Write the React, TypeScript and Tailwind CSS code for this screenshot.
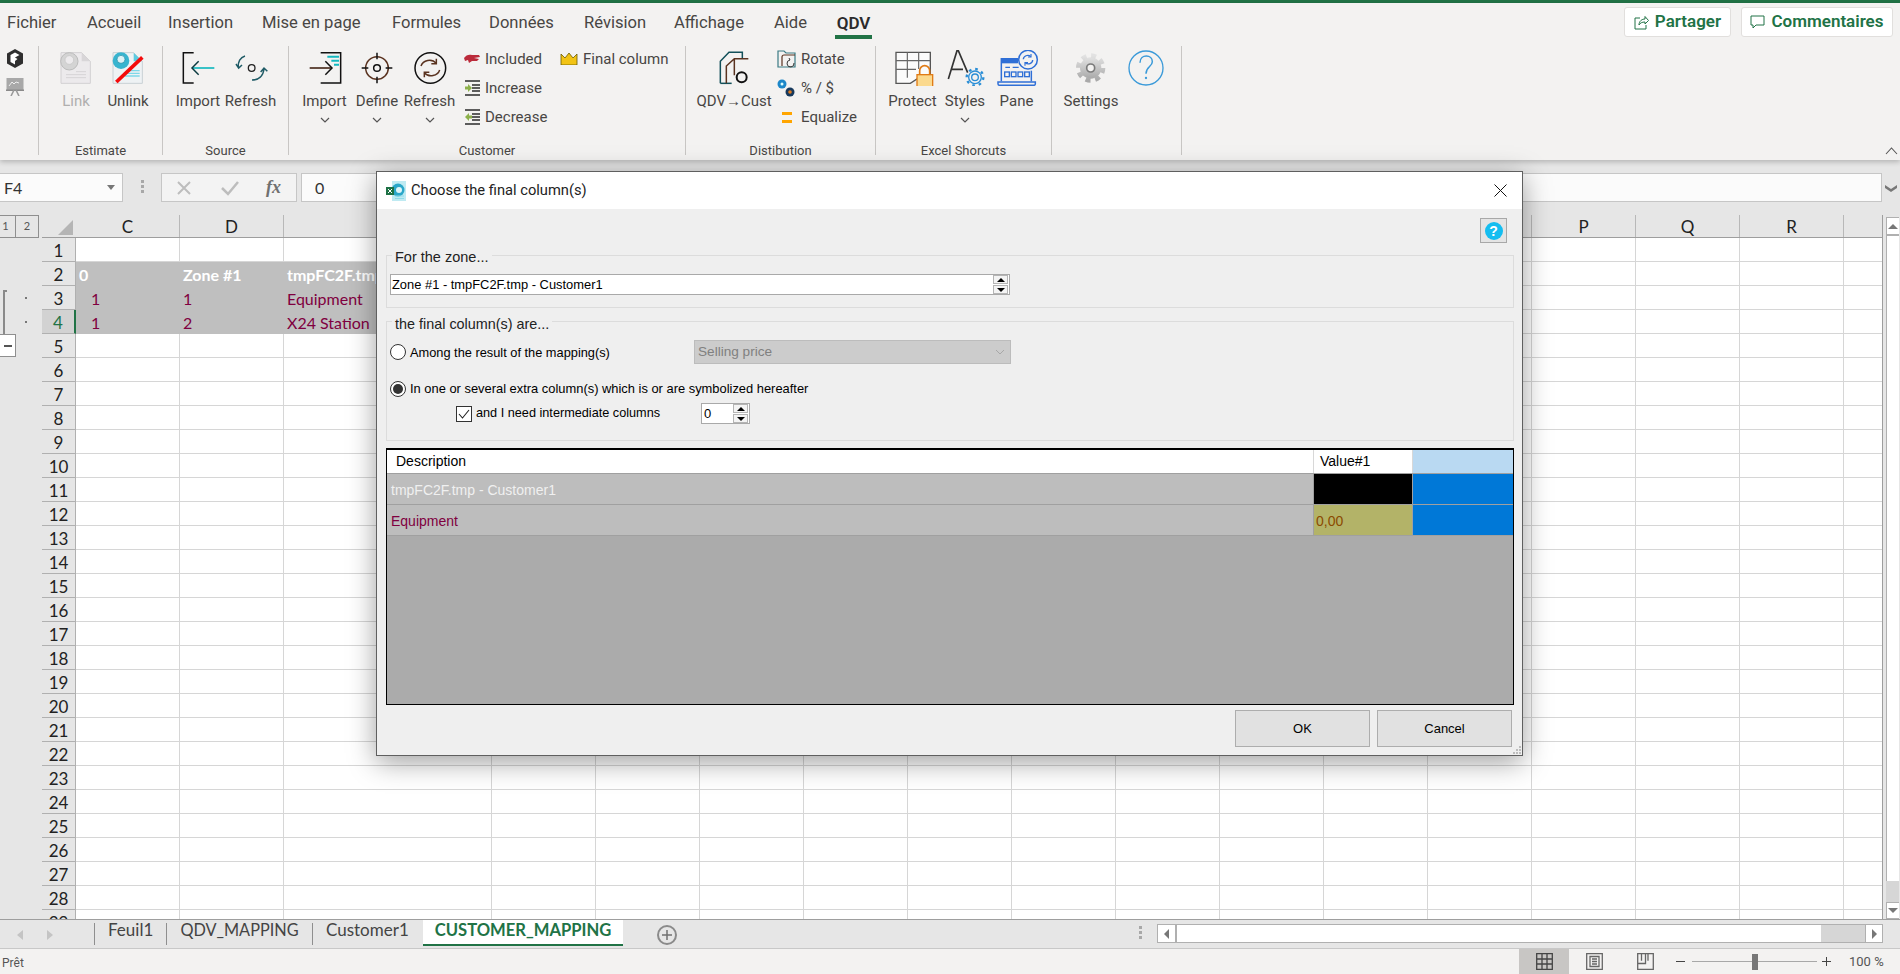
import React from "react";

const Ui = "font-['Roboto',sans-serif]";
const Cal = "font-['Lato',sans-serif]";
const Ms = "font-['Liberation_Sans',Arial,sans-serif]";

function Ico({ cx, children }: { cx: number; children: React.ReactNode }) {
  return (
    <svg width={44} height={36} viewBox={`${cx - 66} 18 132 108`} className="block shrink-0" fill="none">
      {children}
    </svg>
  );
}

function Chev() {
  return (
    <svg width={10} height={6} viewBox="0 0 10 6" className="block" fill="none">
      <path d="M1 1l4 4 4-4" stroke="#555" strokeWidth="1.2" />
    </svg>
  );
}

function Large({
  w,
  label,
  chev,
  dim,
  children,
}: {
  w: string;
  label?: string;
  chev?: boolean;
  dim?: boolean;
  children: React.ReactNode;
}) {
  return (
    <div className={`${w} flex shrink-0 flex-col items-center`}>
      <div className="flex h-[36px] justify-center">{children}</div>
      {label && (
        <div className={`mt-[5px] h-[20px] whitespace-nowrap text-[15px] leading-[20px] ${dim ? "text-[#b0afae]" : "text-[#484644]"}`}>
          {label}
        </div>
      )}
      {chev && (
        <div className="mt-[6px]">
          <Chev />
        </div>
      )}
    </div>
  );
}

function Small({ slot, icon, label }: { slot: string; icon: React.ReactNode; label: string }) {
  return (
    <div className="flex h-[24px] items-center whitespace-nowrap text-[15px] text-[#484644]">
      <div className={`${slot} flex shrink-0 items-center`}>{icon}</div>
      {label}
    </div>
  );
}

function Group({ w, label, children }: { w: string; label?: string; children: React.ReactNode }) {
  return (
    <div className={`${w} flex h-[109px] shrink-0 flex-col border-r border-[#c8c6c4]`}>
      <div className="flex flex-1 items-start pt-[4px]">{children}</div>
      {label && <div className="-mb-[4px] h-[16px] text-center text-[13px] leading-[16px] text-[#484644]">{label}</div>}
    </div>
  );
}

function LinesIcon({ dir }: { dir: "in" | "out" }) {
  return (
    <svg width={17} height={16} viewBox="0 0 17 16" fill="none" className="block">
      <path d="M1 1h15M8 5h8M8 8h8M8 11h8M1 15h15" stroke="#2b2b2b" strokeWidth="1.7" />
      {dir === "in" ? (
        <path d="M1 6.500h3V4l4 4-4 4V9.500H1z" fill="#8cb04a" />
      ) : (
        <path d="M8 6.500H5V4L1 8l4 4V9.500h3z" fill="#8cb04a" />
      )}
    </svg>
  );
}

function Ribbon() {
  const tabs: [string, string][] = [
    ["Fichier", "w-[80px]"],
    ["Accueil", "w-[81px]"],
    ["Insertion", "w-[94px]"],
    ["Mise en page", "w-[130px]"],
    ["Formules", "w-[97px]"],
    ["Données", "w-[95px]"],
    ["Révision", "w-[90px]"],
    ["Affichage", "w-[100px]"],
    ["Aide", "w-[61px]"],
  ];
  return (
    <div className={`${Ui} relative z-10 flex h-[157px] shrink-0 flex-col bg-[#f3f2f1] shadow-[0_2px_5px_rgba(0,0,0,0.22)]`}>
      <div className="flex h-[43px] shrink-0 items-start pl-[7px]">
        {tabs.map(([t, w]) => (
          <div key={t} className={`${w} mt-[8px] h-[24px] text-[16.600px] leading-[24px] text-[#484644]`}>
            {t}
          </div>
        ))}
        <div className="mt-[7px] h-[29px] w-[37px] whitespace-nowrap border-b-4 border-[#217346] pt-[1px] text-center text-[17px] font-semibold leading-[24px] text-[#2b2b2b]">
          QDV
        </div>
        <div className="ml-auto mr-[7px] mt-[4px] flex gap-[10px]">
          <div className="flex h-[30px] w-[107px] items-center justify-center gap-[6px] rounded-[3px] border border-[#e1dfdd] bg-white text-[17px] font-semibold text-[#217346]">
            <svg width={15} height={15} viewBox="0 0 15 15" fill="none" stroke="#217346" strokeWidth="1">
              <path d="M6 3H1v11h11v-4M5 10c0-4 3-6 6-6V1.500l3.500 4L11 9V7C8 7 6 8 5 10z" />
            </svg>
            Partager
          </div>
          <div className="flex h-[30px] w-[152px] items-center justify-center gap-[6px] rounded-[3px] border border-[#e1dfdd] bg-white text-[17px] font-semibold text-[#217346]">
            <svg width={15} height={14} viewBox="0 0 15 14" fill="none" stroke="#217346" strokeWidth="1">
              <path d="M1 1h13v9H6l-3 3v-3H1z" />
            </svg>
            Commentaires
          </div>
        </div>
      </div>

      <div className="flex items-start">
        <div className="flex h-[109px] w-[39px] shrink-0 flex-col items-center border-r border-[#c8c6c4] pr-[8px] pt-[3px]">
          <svg width={18} height={19} viewBox="0 0 18 19">
            <path d="M9 0l8 4.500v10L9 19l-8-4.500v-10z" fill="#2f2f2f" />
            <path d="M4.500 6L9 3.500 13.500 6 9 8.500 9 15.500 4.500 13z" fill="#fff" />
            <path d="M9 8.500l2.500 1.500L9 12z" fill="#fff" />
          </svg>
          <svg width={18} height={19} viewBox="0 0 18 19" className="mt-[9px]">
            <rect x="0.500" y="1" width="17" height="12" fill="#a8a8a8" />
            <path d="M3 9l3-4 2 2 2-2 3 1" stroke="#eee" fill="none" />
            <rect x="0" y="12.500" width="18" height="1.500" fill="#8a8a8a" />
            <path d="M5 19l3-6M13 19l-3-6" stroke="#9a9a9a" strokeWidth="1.600" />
          </svg>
        </div>

        <Group w="w-[124px]" label="Estimate">
          <div className="flex pl-[11px]">
            <Large w="w-[52px]" label="Link" dim>
              <Ico cx={225}>
                <path d="M180 26h62l26 26v66h-88z" fill="#eceaec" stroke="#d2d0d2" strokeWidth="3" />
                <path d="M242 26v26h26z" fill="#d8d6d8" />
                <circle cx="205" cy="52" r="26" fill="#d4d4d4" stroke="#bbb" strokeWidth="3" />
                <circle cx="205" cy="48" r="13" fill="#eceaec" stroke="#c4c4c4" strokeWidth="2" />
                <path d="M195 92h60M195 101h60M225 83h30" stroke="#d6d4d6" strokeWidth="3" />
              </Ico>
            </Large>
            <Large w="w-[52px]" label="Unlink">
              <Ico cx={381}>
                <path d="M336 26h62l26 26v66h-88z" fill="#eef2f4" stroke="#c8d0d4" strokeWidth="3" />
                <path d="M398 26v26h26z" fill="#5ccbe0" />
                <circle cx="360" cy="50" r="25" fill="#37b4cf" />
                <circle cx="360" cy="46" r="12" fill="#dcf2f6" stroke="#1d8ba5" strokeWidth="2" />
                <path d="M372 88h44M372 96h44M382 80h34" stroke="#7fd7e8" strokeWidth="4" />
                <path d="M346 114L424 40" stroke="#f40b0b" strokeWidth="11" />
              </Ico>
            </Large>
          </div>
        </Group>

        <Group w="w-[126px]" label="Source">
          <div className="flex pl-[9px]">
            <Large w="w-[52px]" label="Import">
              <Ico cx={596}>
                <path d="M583 26h-31v91h31" stroke="#111" strokeWidth="4.500" />
                <path d="M645 72h-66" stroke="#14b8bf" strokeWidth="5" />
                <path d="M598 52l-20 20 20 20" stroke="#0c3b40" strokeWidth="4.500" />
              </Ico>
            </Large>
            <Large w="w-[53px]" label="Refresh">
              <Ico cx={753}>
                <circle cx="755" cy="72" r="10" stroke="#222" strokeWidth="4" />
                <path d="M735 36c-14 4-22 18-20 34M708 60l8 12 10-9" stroke="#1f5b66" strokeWidth="4.500" />
                <path d="M756 108c20 0 34-12 36-34M782 84l10-12 10 10" stroke="#1f5b66" strokeWidth="4.500" />
              </Ico>
            </Large>
          </div>
        </Group>

        <Group w="w-[397px]" label="Customer">
          <div className="flex pl-[9px]">
            <Large w="w-[53px]" label="Import" chev>
              <Ico cx={973}>
                <path d="M960 26h60v91h-60" stroke="#111" strokeWidth="4.500" />
                <path d="M980 38h35M992 50h23M1000 62h15" stroke="#14b8bf" strokeWidth="6" />
                <path d="M927 72h66" stroke="#4a2c1d" strokeWidth="5" />
                <path d="M974 52l20 20-20 20" stroke="#111" strokeWidth="4.500" />
              </Ico>
            </Large>
            <Large w="w-[52px]" label="Define" chev>
              <Ico cx={1131}>
                <circle cx="1131" cy="72" r="34" stroke="#5a3320" strokeWidth="4.500" />
                <circle cx="1131" cy="72" r="10" stroke="#111" strokeWidth="4.500" />
                <path d="M1131 26v20M1131 98v20M1085 72h20M1157 72h20" stroke="#111" strokeWidth="4.500" />
              </Ico>
            </Large>
            <Large w="w-[53px]" label="Refresh" chev>
              <Ico cx={1289}>
                <circle cx="1290" cy="72" r="46" stroke="#111" strokeWidth="4.500" />
                <path d="M1262 66c6-18 32-24 46-8M1318 78c-6 18-32 24-46 8" stroke="#5a3320" strokeWidth="4.500" />
                <path d="M1308 44v15h-15M1272 100V85h15" stroke="#5a3320" strokeWidth="4.500" />
              </Ico>
            </Large>
            <div className="-mt-[3px] ml-[8px] flex w-[96px] flex-col gap-[5px]">
              <Small
                slot="w-[21px]"
                label="Included"
                icon={
                  <svg width={16} height={10} viewBox="0 0 16 10">
                    <path d="M0 4c2-3 5-4 8-3h7l1 2-6 1 5 1-2 2H8L5 9 4 6 1 7z" fill="#bb2b3b" />
                  </svg>
                }
              />
              <Small slot="w-[21px]" label="Increase" icon={<LinesIcon dir="in" />} />
              <Small slot="w-[21px]" label="Decrease" icon={<LinesIcon dir="out" />} />
            </div>
            <div className="-mt-[3px]">
              <Small
                slot="w-[23px]"
                label="Final column"
                icon={
                  <svg width={18} height={12} viewBox="0 0 18 12">
                    <path d="M1 1l4 4 4-5 4 5 4-4v11H1z" fill="#f2c314" stroke="#6b5a00" strokeWidth="0.800" />
                  </svg>
                }
              />
            </div>
          </div>
        </Group>

        <Group w="w-[190px]" label="Distibution">
          <div className="flex pl-[5px]">
            <Large w="w-[86px]" label="QDV→Cust">
              <Ico cx={107}>
                <path d="M66 118V52l26-27h40v20" stroke="#12505a" strokeWidth="4.500" />
                <path d="M66 118h34" stroke="#12505a" strokeWidth="4.500" />
                <path d="M84 118V66l24-22h42M108 44v50" stroke="#5a3320" strokeWidth="4.500" />
                <circle cx="130" cy="100" r="15" stroke="#111" strokeWidth="6" />
              </Ico>
            </Large>
            <div className="-mt-[3px] flex flex-col gap-[5px]">
              <Small
                slot="w-[24px]"
                label="Rotate"
                icon={
                  <svg width={20} height={20} viewBox="0 0 20 20" fill="none">
                    <path d="M1 18V2h6l2 2h9v14z" stroke="#3a7a84" strokeWidth="1.200" />
                    <path d="M5 17V8a2 2 0 012-2h11" stroke="#5a3320" strokeWidth="1.200" />
                    <path d="M17 14a3.500 3.500 0 11-4-3l-1-2" stroke="#333" strokeWidth="1" />
                  </svg>
                }
              />
              <Small
                slot="w-[24px]"
                label="% / $"
                icon={
                  <svg width={18} height={18} viewBox="0 0 18 18">
                    <circle cx="5" cy="5" r="4.500" fill="#1c87c9" />
                    <circle cx="5" cy="5" r="1.500" fill="#dff" />
                    <circle cx="13" cy="13" r="4.500" fill="#17395c" />
                    <circle cx="13" cy="13" r="1.800" fill="#e07a1f" />
                  </svg>
                }
              />
              <Small
                slot="w-[24px]"
                label="Equalize"
                icon={
                  <div className="ml-[5px] flex h-[11px] w-[10px] flex-col justify-between">
                    <div className="h-[3px] bg-[#ffa500]" />
                    <div className="h-[3px] bg-[#ffa500]" />
                  </div>
                }
              />
            </div>
          </div>
        </Group>

        <Group w="w-[176px]" label="Excel Shorcuts">
          <div className="flex pl-[10px]">
            <Large w="w-[53px]" label="Protect">
              <Ico cx={636}>
                <path d="M585 25h103v80h-40l-20 13h-43z" fill="#fbfbfb" stroke="#555" strokeWidth="4" />
                <path d="M619 25v76M653 25v50M585 50h103M585 76h60" stroke="#666" strokeWidth="3.500" />
                <rect x="648" y="92" width="47" height="38" fill="#fbd98d" stroke="#e07b16" strokeWidth="4" />
                <path d="M656 92V80a15 15 0 0130 0v12" stroke="#e07b16" strokeWidth="5" />
              </Ico>
            </Large>
            <Large w="w-[52px]" label="Styles" chev>
              <Ico cx={792}>
                <path d="M742 105l26-85h4l28 66M752 76h34" stroke="#333" strokeWidth="5" />
                <circle cx="822" cy="100" r="10" stroke="#2a8ed6" strokeWidth="4" />
                <circle cx="822" cy="100" r="19" fill="#f3f2f1" fillOpacity="0" stroke="#2a8ed6" strokeWidth="4" />
                <circle cx="822" cy="100" r="25" stroke="#2a8ed6" strokeWidth="7" strokeDasharray="8 11.600" />
              </Ico>
            </Large>
            <Large w="w-[51px]" label="Pane">
              <Ico cx={945}>
                <path d="M898 112V44h50" stroke="#2f6fd6" strokeWidth="4.500" />
                <path d="M898 44h50v14h-50z" fill="#2f6fd6" />
                <path d="M888 114h112v5a5 5 0 01-5 5H893a5 5 0 01-5-5z" stroke="#2f6fd6" strokeWidth="4.500" />
                <path d="M988 80v32" stroke="#2f6fd6" strokeWidth="4.500" />
                <path d="M910 70h14M932 70h18" stroke="#2f6fd6" strokeWidth="4" />
                <rect x="908" y="84" width="14" height="14" stroke="#2f6fd6" strokeWidth="4" />
                <rect x="928" y="84" width="14" height="14" stroke="#2f6fd6" strokeWidth="4" />
                <rect x="948" y="84" width="14" height="14" stroke="#2f6fd6" strokeWidth="4" />
                <rect x="968" y="84" width="14" height="14" stroke="#2f6fd6" strokeWidth="4" />
                <circle cx="978" cy="47" r="28" fill="#f3f2f1" stroke="#2f6fd6" strokeWidth="4.500" />
                <path d="M964 46c0-10 14-16 22-8M992 48c0 10-14 16-22 8" stroke="#2f6fd6" strokeWidth="4" />
                <path d="M987 30v9h-9M969 65v-9h9" stroke="#2f6fd6" strokeWidth="3.500" />
              </Ico>
            </Large>
          </div>
        </Group>

        <Group w="w-[130px]">
          <div className="flex pl-[11px]">
            <Large w="w-[56px]" label="Settings">
              <Ico cx={1173}>
                <defs>
                  <linearGradient id="gearFill" x1="0" y1="0" x2="0" y2="1">
                    <stop offset="0" stopColor="#e2e2e2" />
                    <stop offset="1" stopColor="#a9a9a9" />
                  </linearGradient>
                </defs>
                <circle cx="1172" cy="72" r="32" fill="url(#gearFill)" />
                <circle cx="1172" cy="72" r="37" stroke="url(#gearFill)" strokeWidth="14" strokeDasharray="15 14.100" />
                <circle cx="1172" cy="72" r="12" fill="#f3f2f1" stroke="#7a7a7a" strokeWidth="5" />
              </Ico>
            </Large>
            <Large w="w-[53px]">
              <Ico cx={1338}>
                <circle cx="1338" cy="72" r="51" stroke="#3a9ad9" strokeWidth="4" />
                <path d="M1320 56c0-14 10-20 19-20 10 0 18 7 18 17 0 15-19 15-19 36" stroke="#3a9ad9" strokeWidth="4.500" />
                <circle cx="1338" cy="102" r="3.500" fill="#3a9ad9" />
              </Ico>
            </Large>
          </div>
        </Group>
        <div className="ml-auto mr-[2px] mt-[101px]">
          <svg width={13} height={8} viewBox="0 0 13 8" fill="none" className="block">
            <path d="M1 7l5.500-6L12 7" stroke="#555" strokeWidth="1.100" />
          </svg>
        </div>
      </div>
    </div>
  );
}

function FormulaBar() {
  return (
    <div className={`${Cal} flex h-[55px] shrink-0 items-start bg-[#e6e6e6] pt-[13px]`}>
      <div className="flex h-[29px] w-[123px] shrink-0 items-center justify-between border-y border-r border-[#c6c6c6] bg-[#fbfbfb] pl-[4px] pr-[7px] text-[16px] text-[#333]">
        F4
        <div className="h-0 w-0 border-x-[4px] border-t-[5px] border-x-transparent border-t-[#777]" />
      </div>
      <div className="flex w-[38px] shrink-0 flex-col items-center gap-[2px] pt-[7px]">
        <div className="h-[3px] w-[3px] bg-[#a8a8a8]" />
        <div className="h-[3px] w-[3px] bg-[#a8a8a8]" />
        <div className="h-[3px] w-[3px] bg-[#a8a8a8]" />
      </div>
      <div className="flex h-[29px] w-[136px] shrink-0 items-center border border-[#c6c6c6] bg-[#f3f3f3]">
        <svg width={16} height={16} viewBox="0 0 16 16" className="ml-[14px]" fill="none">
          <path d="M2 2l12 12M14 2L2 14" stroke="#bdbdbd" strokeWidth="2" />
        </svg>
        <svg width={18} height={16} viewBox="0 0 18 16" className="ml-[29px]" fill="none">
          <path d="M1 8l6 6L17 2" stroke="#bdbdbd" strokeWidth="2.500" />
        </svg>
        <span className="ml-[27px] font-['Liberation_Serif',serif] text-[18px] font-bold italic text-[#707070]">fx</span>
      </div>
      <div className="ml-[4px] flex h-[29px] w-[1581px] shrink-0 items-center border border-[#c6c6c6] bg-[#fbfbfb] pl-[13px] text-[16px] text-[#333]">
        0
      </div>
      <svg width={14} height={9} viewBox="0 0 14 9" className="ml-[2px] mt-[11px]">
        <path d="M1 1l6 4 6-4v3L7 8 1 4z" fill="#777" />
      </svg>
    </div>
  );
}

const COLS = ["C", "D", "E", "F", "G", "H", "I", "J", "K", "L", "M", "N", "O", "P", "Q", "R", ""];
const MAROON = "text-[#800040]";
const CELLS: Record<number, [string, string, string]> = {
  3: ["1", "1", "Equipment"],
  4: ["1", "2", "X24 Station"],
};

function GutterCell({ n }: { n: number }) {
  if (n === 3)
    return (
      <div className="flex h-full w-[42px] shrink-0 items-center bg-[#e6e6e6]">
        <div className="ml-[3px] mt-[4px] h-[22px] w-[4px] self-start border-l-2 border-t-2 border-[#8a8a8a]" />
        <div className="ml-[18px] h-[2px] w-[2px] bg-[#777]" />
      </div>
    );
  if (n === 4)
    return (
      <div className="flex h-full w-[42px] shrink-0 items-center bg-[#e6e6e6]">
        <div className="ml-[3px] h-full w-[4px] border-l-2 border-[#8a8a8a]" />
        <div className="ml-[18px] h-[2px] w-[2px] bg-[#777]" />
      </div>
    );
  if (n === 5)
    return (
      <div className="h-full w-[42px] shrink-0 bg-[#e6e6e6]">
        <div className="flex h-[23px] w-[16px] items-center justify-center border border-l-0 border-[#8f8f8f] bg-white">
          <div className="h-[2px] w-[8px] bg-[#555]" />
        </div>
      </div>
    );
  return <div className="h-full w-[42px] shrink-0 bg-[#e6e6e6]" />;
}

function Row({ n }: { n: number }) {
  const gray = n >= 2 && n <= 4;
  return (
    <div className="flex h-[24px] shrink-0">
      <GutterCell n={n} />
      <div
        className={`flex w-[34px] shrink-0 items-center justify-center border-b border-r border-[#b0b0b0] pt-[2px] text-[17px] ${
          n === 4 ? "border-r-2 border-r-[#217346] bg-[#d2d2d2] text-[#217346]" : "bg-[#e6e6e6] text-[#222]"
        }`}
      >
        {n}
      </div>
      <div className="flex min-w-0 flex-1 overflow-hidden">
        {COLS.map((_, i) => {
          const isGray = gray && i < 3;
          let content: React.ReactNode = null;
          if (n === 2 && i < 3)
            content = <span className="pl-[3px] font-bold text-white">{["0", "Zone #1", "tmpFC2F.tmp"][i]}</span>;
          if ((n === 3 || n === 4) && i < 3)
            content = (
              <span className={`${MAROON} ${i === 0 ? "pl-[15px]" : "pl-[3px]"}`}>{CELLS[n][i]}</span>
            );
          return (
            <div
              key={i}
              className={`flex h-full shrink-0 items-center overflow-hidden whitespace-nowrap pt-[2px] text-[16px] ${
                i === 2 ? "w-[208px]" : "w-[104px]"
              } ${isGray ? "bg-[#bfbfbf]" : "border-b border-r border-[#d6d6d6] bg-white"}`}
            >
              {content}
            </div>
          );
        })}
      </div>
    </div>
  );
}

function Sheet() {
  const rows = Array.from({ length: 29 }, (_, i) => i + 1);
  return (
    <div className={`${Cal} flex h-[704px] shrink-0 bg-[#e6e6e6]`}>
      <div className="flex w-[1883px] shrink-0 flex-col overflow-hidden border-r border-[#9e9e9e]">
        <div className="flex h-[23px] shrink-0">
          <div className="flex h-full w-[42px] shrink-0">
            <div className="flex h-[23px] w-[16px] items-center justify-center border border-l-0 border-[#8f8f8f] pr-[4px] text-[11px] text-[#555]">1</div>
            <div className="flex h-[23px] w-[23px] items-center justify-center border-y border-r border-[#8f8f8f] text-[11px] text-[#555]">2</div>
          </div>
          <div className="flex w-[34px] shrink-0 items-end justify-end border-b border-[#9e9e9e] pb-[2px] pr-[3px]">
            <div className="h-0 w-0 border-b-[15px] border-l-[15px] border-b-[#b5b5b5] border-l-transparent" />
          </div>
          <div className="flex min-w-0 flex-1 overflow-hidden border-b border-[#9e9e9e]">
            {COLS.map((c, i) => (
              <div
                key={i}
                className={`flex h-full shrink-0 items-center justify-center border-r border-[#b8b8b8] pt-[2px] text-[17px] text-[#222] ${
                  i === 2 ? "w-[208px]" : "w-[104px]"
                }`}
              >
                {c}
              </div>
            ))}
          </div>
        </div>
        {rows.map((n) => (
          <Row key={n} n={n} />
        ))}
      </div>
      <div className="ml-[3px] mt-[2px] flex w-[13px] shrink-0 flex-col">
        <div className="flex h-[19px] items-center justify-center border-b-2 border-l border-t border-[#b0b0b0] bg-white">
          <div className="h-0 w-0 border-x-[5px] border-b-[5px] border-x-transparent border-b-[#777]" />
        </div>
        <div className="h-[645px] border-l border-[#b0b0b0] bg-white" />
        <div className="flex-1 bg-[#d6d6d6]" />
        <div className="flex h-[17px] items-center justify-center border-y border-l border-[#b0b0b0] bg-white">
          <div className="h-0 w-0 border-x-[5px] border-t-[5px] border-x-transparent border-t-[#777]" />
        </div>
      </div>
    </div>
  );
}

function SheetTabs() {
  return (
    <div className={`${Cal} flex h-[30px] shrink-0 items-start border-y border-b-[#c8c8c8] border-t-[#9e9e9e] bg-[#e6e6e6]`}>
      <div className="flex w-[94px] shrink-0 items-center pl-[17px] pt-[10px]">
        <div className="h-0 w-0 border-y-[5px] border-r-[6px] border-y-transparent border-r-[#c4c4c4]" />
        <div className="ml-[24px] h-0 w-0 border-y-[5px] border-l-[6px] border-y-transparent border-l-[#c4c4c4]" />
      </div>
      <div className="mt-[3px] flex h-[22px] w-[72px] shrink-0 items-center border-l border-[#8f8f8f] pb-[8px] pl-[13px] text-[17px] text-[#444]">Feuil1</div>
      <div className="mt-[3px] flex h-[22px] w-[146px] shrink-0 items-center justify-center whitespace-nowrap border-l border-[#8f8f8f] pb-[8px] text-[16.300px] text-[#444]">QDV_MAPPING</div>
      <div className="mt-[3px] flex h-[22px] w-[111px] shrink-0 items-center border-l border-[#8f8f8f] pb-[8px] pl-[13px] text-[17px] text-[#444]">Customer1</div>
      <div className="flex h-[26px] w-[200px] shrink-0 items-center justify-center whitespace-nowrap border-b-2 border-[#217346] bg-white pb-[4px] text-[16.600px] font-bold text-[#217346]">
        CUSTOMER_MAPPING
      </div>
      <div className="ml-[34px] mt-[5px] flex h-[20px] w-[20px] shrink-0 items-center justify-center rounded-full border-2 border-[#8a8a8a]">
        <svg width={10} height={10} viewBox="0 0 10 10">
          <path d="M5 0v10M0 5h10" stroke="#707070" strokeWidth="1.500" />
        </svg>
      </div>
      <div className="ml-[462px] mt-[6px] flex flex-col gap-[2px]">
        <div className="h-[3px] w-[3px] bg-[#a8a8a8]" />
        <div className="h-[3px] w-[3px] bg-[#a8a8a8]" />
        <div className="h-[3px] w-[3px] bg-[#a8a8a8]" />
      </div>
      <div className="ml-[15px] mt-[4px] flex h-[19px] w-[726px] shrink-0 items-stretch border border-[#b0b0b0]">
        <div className="flex w-[19px] items-center justify-center border-r-2 border-[#b0b0b0] bg-white">
          <div className="h-0 w-0 border-y-[5px] border-r-[5px] border-y-transparent border-r-[#777]" />
        </div>
        <div className="w-[644px] bg-white" />
        <div className="flex-1 bg-[#d6d6d6]" />
        <div className="flex w-[17px] items-center justify-center border-l border-[#b0b0b0] bg-white">
          <div className="h-0 w-0 border-y-[5px] border-l-[5px] border-y-transparent border-l-[#777]" />
        </div>
      </div>
    </div>
  );
}

function StatusBar() {
  return (
    <div className={`${Ui} flex h-[25px] shrink-0 items-center bg-[#f3f2f1] pl-[2px] text-[12px] text-[#555]`}>
      <span className="pt-[2px]">Prêt</span>
      <div className="ml-auto flex h-full items-center">
        <div className="flex h-full w-[50px] items-center justify-center bg-[#c8c6c4]">
          <svg width={17} height={17} viewBox="0 0 17 17" fill="none" stroke="#444" strokeWidth="1.300">
            <path d="M.7.7h15.600v15.600H.7zM6 .7v15.600M11 .7v15.600M.7 6h15.600M.7 11h15.600" />
          </svg>
        </div>
        <div className="flex h-full w-[51px] items-center justify-center">
          <svg width={17} height={17} viewBox="0 0 17 17" fill="none" stroke="#666" strokeWidth="1.300">
            <path d="M.7.7h15.600v15.600H.7zM4 3.500h9v10H4zM6 6h5M6 8.500h5M6 11h5" />
          </svg>
        </div>
        <div className="flex h-full w-[50px] items-center justify-center">
          <svg width={17} height={17} viewBox="0 0 17 17" fill="none" stroke="#666" strokeWidth="1.300">
            <path d="M.7.7h15.600v15.600H.7zM.7 10.500h7.800V.7M4.500.7v7M11 .7v7" />
          </svg>
        </div>
        <div className="ml-[6px] h-[1px] w-[9px] bg-[#444]" />
        <div className="relative ml-[7px] flex h-[16px] w-[125px] items-center">
          <div className="h-[1px] w-full bg-[#a8a8a8]" />
          <div className="absolute left-[60px] top-0 h-[16px] w-[6px] bg-[#777]" />
        </div>
        <svg width={9} height={9} viewBox="0 0 9 9" className="ml-[5px]">
          <path d="M4.500 0v9M0 4.500h9" stroke="#444" />
        </svg>
        <div className="ml-[18px] mr-[15px] w-[36px] whitespace-nowrap pt-[1px] text-[13px]">100 %</div>
      </div>
    </div>
  );
}

function Spin({ cls }: { cls?: string }) {
  return (
    <div className={`flex w-[15px] shrink-0 flex-col gap-[1px] ${cls ?? ""}`}>
      <div className="flex h-[9px] items-center justify-center border border-[#b5b5b5] bg-[#f4f4f4]">
        <div className="h-0 w-0 border-x-[4px] border-b-[4px] border-x-transparent border-b-black" />
      </div>
      <div className="flex h-[9px] items-center justify-center border border-[#b5b5b5] bg-[#f4f4f4]">
        <div className="h-0 w-0 border-x-[4px] border-t-[4px] border-x-transparent border-t-black" />
      </div>
    </div>
  );
}

function Radio({ on }: { on?: boolean }) {
  return (
    <div className="flex h-[16px] w-[16px] shrink-0 items-center justify-center rounded-full border border-[#333] bg-white">
      {on && <div className="h-[10px] w-[10px] rounded-full bg-[#333]" />}
    </div>
  );
}

function Dialog() {
  return (
    <div className={`${Ms} absolute left-[376px] top-[171px] z-20 flex h-[585px] w-[1147px] flex-col border border-[#5f5f5f] bg-[#efefef] text-[13px] text-black shadow-[0_6px_26px_rgba(0,0,0,0.38)]`}>
      <div className="flex h-[37px] shrink-0 items-center bg-white pl-[9px] pr-[15px]">
        <svg width={20} height={20} viewBox="0 0 20 20" className="shrink-0">
          <path d="M6 0h14v20H6z" fill="#bfeaf2" />
          <circle cx="12" cy="9" r="6.500" fill="#2aa7c9" />
          <circle cx="13" cy="9" r="3" fill="#dff5f9" />
          <path d="M9 15h9M9 17.500h9" stroke="#8fdcea" />
          <rect x="0" y="6" width="8" height="8" fill="#1e7145" />
          <path d="M2 8l4 4M6 8l-4 4" stroke="#fff" />
        </svg>
        <div className={`${Ui} ml-[5px] text-[14.700px] text-[#222]`}>Choose the final column(s)</div>
        <svg width={13} height={13} viewBox="0 0 13 13" className="ml-auto" fill="none">
          <path d="M.5.500l12 12M12.500.500l-12 12" stroke="#111" strokeWidth="1" />
        </svg>
      </div>

      <div className="flex min-h-0 flex-1 flex-col pl-[9px] pr-[8px]">
        <div className="mr-[7px] mt-[9px] flex h-[25px] w-[27px] shrink-0 items-center justify-center self-end border border-[#a8a8a8] bg-[#e4e4e4]">
          <div className="flex h-[18px] w-[18px] items-center justify-center rounded-full bg-[#14bdf0] text-[14px] font-bold leading-none text-white">?</div>
        </div>

        <div className="mt-[12px] h-[53px] shrink-0 border border-[#dcdcdc] pl-[3px]">
          <div className="-mt-[9px] ml-[2px] h-[18px] w-fit bg-[#efefef] px-[3px] pt-[1px] text-[14.500px] leading-[18px] text-[#222]">For the zone...</div>
          <div className="mt-[9px] flex h-[21px] w-[620px] items-center justify-between border border-[#a9a9a9] bg-white pl-[1px] pr-[1px] text-[12.900px]">
            <span className="pt-[1px]">Zone #1 - tmpFC2F.tmp - Customer1</span>
            <Spin />
          </div>
        </div>

        <div className="mt-[13px] h-[120px] shrink-0 border border-[#dcdcdc] pl-[3px]">
          <div className="-mt-[9px] ml-[2px] h-[18px] w-fit bg-[#efefef] px-[3px] pt-[2px] text-[14.400px] leading-[18px] text-[#222]">the final column(s) are...</div>
          <div className="mt-[9px] flex h-[24px] items-center">
            <Radio />
            <div className="ml-[4px] w-[284px] whitespace-nowrap pt-[1px] text-[12.800px]">Among the result of the mapping(s)</div>
            <div className="flex h-[24px] w-[317px] items-center justify-between border border-[#bcbcbc] bg-[#cccccc] pl-[3px] pr-[5px] text-[13.600px] text-[#808080]">
              Selling price
              <svg width={10} height={6} viewBox="0 0 10 6" fill="none">
                <path d="M1 1l4 4 4-4" stroke="#a8a8a8" />
              </svg>
            </div>
          </div>
          <div className="mt-[13px] flex h-[24px] items-center">
            <Radio on />
            <div className="ml-[4px] whitespace-nowrap text-[12.900px]">In one or several extra column(s) which is or are symbolized hereafter</div>
          </div>
          <div className="mt-[2px] flex h-[21px] items-center pl-[66px]">
            <div className="flex h-[16px] w-[16px] shrink-0 items-center justify-center border border-[#333] bg-white">
              <svg width={12} height={10} viewBox="0 0 12 10" fill="none">
                <path d="M1 5l3.500 4L11 1" stroke="#222" strokeWidth="1.100" />
              </svg>
            </div>
            <div className="ml-[4px] w-[225px] whitespace-nowrap text-[12.700px]">and I need intermediate columns</div>
            <div className="flex h-[21px] w-[49px] items-center justify-between border border-[#a9a9a9] bg-white pl-[2px] pr-[1px]">
              0
              <Spin />
            </div>
          </div>
        </div>

        <div className="mt-[7px] flex h-[257px] shrink-0 flex-col border border-t-2 border-black bg-[#ababab] text-[14px]">
          <div className="flex h-[24px] shrink-0 border-b border-[#a0a0a0] bg-white">
            <div className="flex flex-1 items-center pl-[9px]">Description</div>
            <div className="flex w-[99px] items-center border-l border-[#d8d8d8] pl-[6px]">Value#1</div>
            <div className="w-[101px] border-l border-[#d8d8d8] bg-[#b9d9f2]" />
          </div>
          <div className="flex h-[31px] shrink-0 border-b border-[#a0a0a0] bg-[#bdbdbd]">
            <div className="flex flex-1 items-center pl-[4px] pt-[2px] text-[#f0f0f0]">tmpFC2F.tmp - Customer1</div>
            <div className="w-[99px] border-l border-[#a0a0a0] bg-black" />
            <div className="w-[101px] border-l border-[#a0a0a0] bg-[#0078d7]" />
          </div>
          <div className="flex h-[31px] shrink-0 border-b border-[#a0a0a0] bg-[#bdbdbd]">
            <div className="flex flex-1 items-center pl-[4px] pt-[2px] text-[#800040]">Equipment</div>
            <div className="flex w-[99px] items-center border-l border-[#a0a0a0] bg-[#b3b368] pl-[2px] pt-[2px] text-[#8b4a00]">0,00</div>
            <div className="w-[101px] border-l border-[#a0a0a0] bg-[#0078d7]" />
          </div>
        </div>

        <div className="mt-[5px] flex justify-end gap-[7px] pr-[2px]">
          <div className="flex h-[37px] w-[135px] items-center justify-center border border-[#adadad] bg-[#e1e1e1]">OK</div>
          <div className="flex h-[37px] w-[135px] items-center justify-center border border-[#adadad] bg-[#e1e1e1]">Cancel</div>
        </div>
      </div>
      <svg width={8} height={8} viewBox="0 0 8 8" className="absolute bottom-[1px] right-[1px]">
        <path d="M6 0h2v2H6zM3 3h2v2H3zM6 3h2v2H6zM0 6h2v2H0zM3 6h2v2H3zM6 6h2v2H6z" fill="#bdbdbd" />
      </svg>
    </div>
  );
}

export default function App() {
  return (
    <div className="relative flex h-[974px] w-[1900px] flex-col overflow-hidden bg-[#e6e6e6]">
      <div className="h-[3px] shrink-0 bg-[#217346]" />
      <Ribbon />
      <FormulaBar />
      <Sheet />
      <SheetTabs />
      <StatusBar />
      <Dialog />
    </div>
  );
}
